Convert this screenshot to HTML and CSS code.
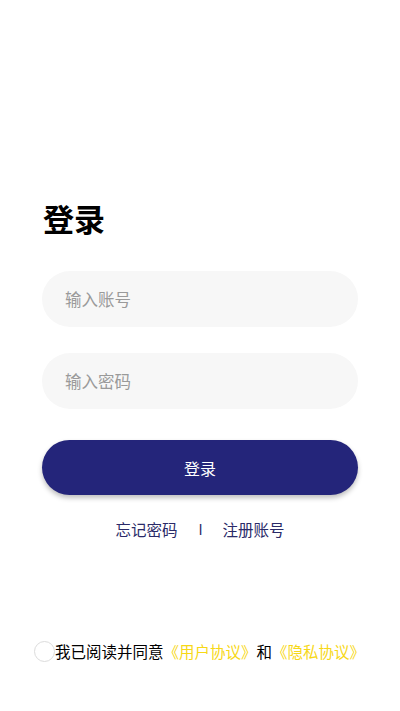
FILE: index.html
```html
<!DOCTYPE html>
<html lang="zh">
<head>
<meta charset="utf-8">
<meta name="viewport" content="width=device-width, initial-scale=1">
<title>登录</title>
<link rel="stylesheet" href="styles.css">
</head>
<body>
<div class="page">
  <main class="login">
    <h1 class="title">登录</h1>
    <div class="field"><input class="input" type="text" placeholder="输入账号"></div>
    <div class="field"><input class="input" type="password" placeholder="输入密码"></div>
    <button class="btn">登录</button>
    <div class="links">
      <span class="link">忘记密码</span>
      <span class="sep">I</span>
      <span class="link">注册账号</span>
    </div>
  </main>
  <footer class="agree">
    <span class="radio"></span>
    <span class="agree-text">我已阅读并同意<span class="proto">《用户协议》</span>和<span class="proto">《隐私协议》</span></span>
  </footer>
</div>
</body>
</html>
```

FILE: styles.css
```css
* { box-sizing: border-box; }
html, body { margin: 0; padding: 0; background: #fff; }
body {
  font-family: "Noto Sans CJK SC", "Noto Sans", sans-serif;
  color: #000;
}
.page {
  width: 400px;
  height: 711px;
  display: flex;
  flex-direction: column;
}
.login {
  padding: 196px 42px 0 42px;
  display: flex;
  flex-direction: column;
}
.title {
  margin: 0 0 32px 1px;
  font-size: 31px;
  line-height: 43px;
  font-weight: 700;
}
.field { margin-bottom: 26px; }
.field + .field { margin-bottom: 31px; }
.input {
  width: 100%;
  height: 56px;
  border: none;
  outline: none;
  border-radius: 28px;
  background: #f7f7f7;
  padding: 0 23px;
  font-family: inherit;
  font-size: 16.5px;
  color: #333;
}
.input::placeholder { color: #9a9a9a; }
.btn {
  height: 55px;
  width: 100%;
  border: none;
  border-radius: 28px;
  background: #24257a;
  color: #fff;
  font-family: inherit;
  font-size: 16px;
  box-shadow: 0 3px 5px rgba(0, 0, 0, 0.25);
  padding: 0;
}
.links {
  margin-top: 22px;
  display: flex;
  justify-content: center;
  align-items: center;
  font-size: 15.5px;
  line-height: 24px;
  color: #2a2a68;
}
.sep { margin: 0 20px 0 21px; font-size: 14px; }
.agree {
  margin-top: auto;
  margin-bottom: 48px;
  padding-left: 34px;
  display: flex;
  align-items: center;
  font-size: 15.5px;
  line-height: 24px;
}
.radio {
  width: 21px;
  height: 21px;
  border-radius: 50%;
  border: 1.5px solid #dcdcdc;
  background: #fff;
}
.proto { color: #f7d816; }
```
